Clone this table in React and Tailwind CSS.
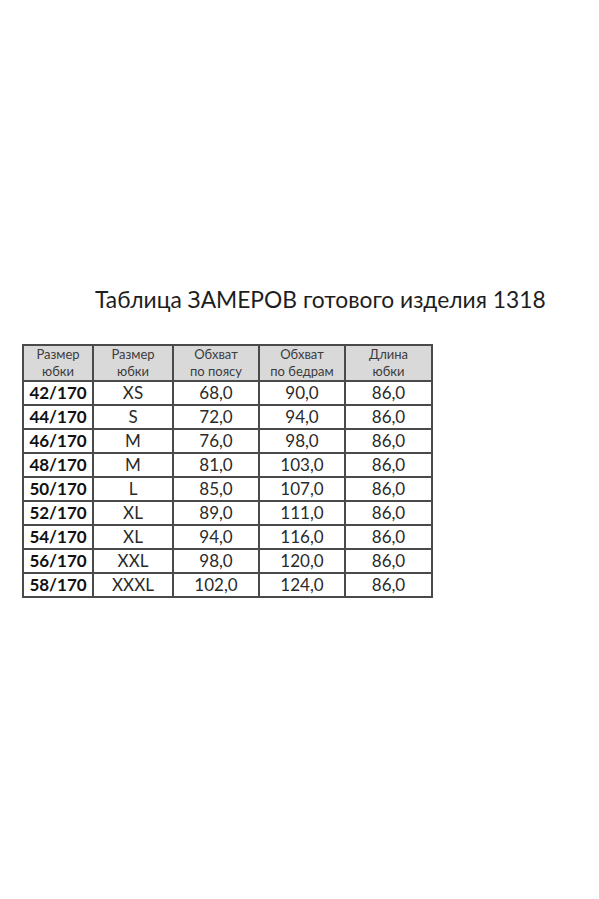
import React from "react";

const rows = [
  ["42/170", "XS", "68,0", "90,0", "86,0"],
  ["44/170", "S", "72,0", "94,0", "86,0"],
  ["46/170", "M", "76,0", "98,0", "86,0"],
  ["48/170", "M", "81,0", "103,0", "86,0"],
  ["50/170", "L", "85,0", "107,0", "86,0"],
  ["52/170", "XL", "89,0", "111,0", "86,0"],
  ["54/170", "XL", "94,0", "116,0", "86,0"],
  ["56/170", "XXL", "98,0", "120,0", "86,0"],
  ["58/170", "XXXL", "102,0", "124,0", "86,0"],
];

const headers = [
  ["Размер", "юбки"],
  ["Размер", "юбки"],
  ["Обхват", "по поясу"],
  ["Обхват", "по бедрам"],
  ["Длина", "юбки"],
];

const widths = ["w-[70px]", "w-[80px]", "w-[86px]", "w-[86px]", "w-[87px]"];

export default function App() {
  return (
    <div className="w-[599px] h-[899px] bg-white font-['Lato','Carlito',sans-serif] text-[#222]">
      <div className="pt-[284px] pl-[95px] text-[22.8px] leading-[30px] text-[#1e1e1e] whitespace-nowrap">
        Таблица ЗАМЕРОВ готового изделия 1318
      </div>
      <div className="pl-[22px] pt-[30px]">
        <table className="border-collapse border-2 border-[#4a4a4a] table-fixed">
          <colgroup>
            {widths.map((w, i) => (
              <col key={i} className={w} />
            ))}
          </colgroup>
          <thead>
            <tr className="bg-[#d9d9d9] h-[34px]">
              {headers.map((h, i) => (
                <th
                  key={i}
                  className="border-2 border-[#4a4a4a] font-normal text-[13px] leading-[17px] text-[#3c3c3c] text-center align-middle p-0"
                >
                  <div>{h[0]}</div>
                  <div>{h[1]}</div>
                </th>
              ))}
            </tr>
          </thead>
          <tbody>
            {rows.map((r, ri) => (
              <tr key={ri} className="h-[24px]">
                {r.map((c, ci) => (
                  <td
                    key={ci}
                    className={
                      "border-2 border-[#4a4a4a] text-center p-0 text-[17px] leading-[20px] " +
                      (ci === 0 ? "font-bold text-[#111]" : "text-[#2a2a2a]")
                    }
                  >
                    {c}
                  </td>
                ))}
              </tr>
            ))}
          </tbody>
        </table>
      </div>
    </div>
  );
}
